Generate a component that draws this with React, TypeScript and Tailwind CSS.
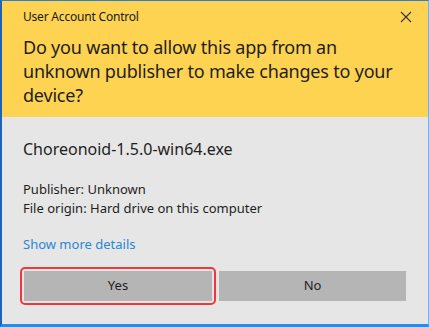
import React from "react";

export default function App() {
  return (
    <div
      className="w-[429px] h-[327px] flex flex-col bg-[#e6e6e6] border-l-2 border-t border-r border-b-[3px] border-l-[#1b64b8] border-t-[#2d7fd0] border-r-[#76b0ea] border-b-[#2b8ae3] overflow-hidden"
      style={{ fontFamily: '"Noto Sans", "Open Sans", sans-serif' }}
    >
      <div className="bg-[#fed352] h-[116px] flex flex-col pl-[21px] pr-[15px]">
        <div className="flex items-start justify-between h-[34px] pt-[9px]">
          <span className="text-[12px] text-[#1a1a1a] leading-[14px] tracking-[-0.2px]">User Account Control</span>
          <svg width="12" height="12" viewBox="0 0 12 12" className="mr-[1px] mt-[1px]">
            <path d="M1 1 L11 11 M11 1 L1 11" stroke="#333" strokeWidth="1.1" fill="none" />
          </svg>
        </div>
        <div className="text-[18px] leading-[24px] text-[#1e1e1e] tracking-[-0.2px] whitespace-nowrap">
          Do you want to allow this app from an
          <br />
          unknown publisher to make changes to your
          <br />
          device?
        </div>
      </div>
      <div className="flex flex-col pl-[21px] pr-[22px]">
        <div className="text-[16px] text-[#1e1e1e] mt-[20px] leading-[24px]">
          Choreonoid-1.5.0-win64.exe
        </div>
        <div className="text-[13px] text-[#1e1e1e] mt-[19px] leading-[19px]">
          <div>Publisher: Unknown</div>
          <div>File origin: Hard drive on this computer</div>
        </div>
        <div className="text-[13px] text-[#2a86d6] mt-[17px] leading-[19px]">Show more details</div>
        <div className="flex mt-[13px] gap-[3px] items-center -ml-[3px]">
          <div className="rounded-[5px] border-2 border-[#f0373c] p-[2px] w-[198px]">
            <div className="bg-[#b5b5b5] h-[30px] flex items-center justify-center text-[13px] text-[#1e1e1e]">
              Yes
            </div>
          </div>
          <div className="bg-[#b5b5b5] h-[30px] w-[189px] flex items-center justify-center text-[13px] text-[#1e1e1e]">
            No
          </div>
        </div>
      </div>
    </div>
  );
}
